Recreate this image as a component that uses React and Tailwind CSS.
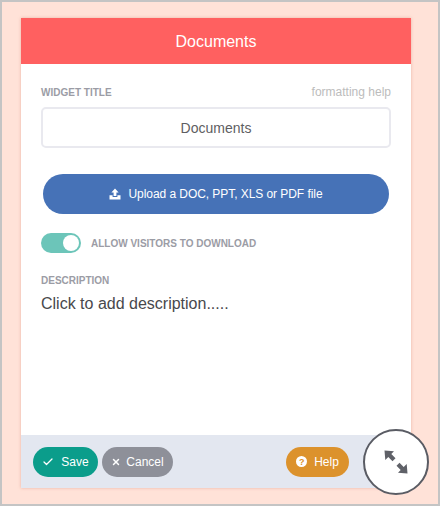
import React from 'react';
import { Check, X } from 'lucide-react';

const Label = ({ children, className = '' }) => (
  <span className={`text-[10px] font-bold text-[#9b9ca5] ${className}`}>{children}</span>
);

const App = () => {
  return (
    <div className="relative h-[506px] w-[440px] overflow-hidden border-2 border-[#c4c4c4] bg-[#ffe2d8] pt-4 pl-[19px] font-['Liberation_Sans',Arial,sans-serif]">
      {/* Widget panel */}
      <div className="flex h-[470px] w-[390px] flex-col bg-white shadow-[0_0_3px_rgba(220,150,130,0.6)]">
        <div className="flex h-[46px] items-center justify-center bg-[#ff6060] pt-0.5 text-base text-white">Documents</div>

        <div className="flex flex-1 flex-col px-5">
          <div className="mt-5 flex items-center justify-between">
            <Label>WIDGET TITLE</Label>
            <span className="text-xs text-[#bcbcbc]">formatting help</span>
          </div>
          <div className="mt-[7px] flex h-[41px] items-center justify-center rounded-[5px] border-2 border-[#e9e9ef] text-sm text-[#5e5e62]">
            Documents
          </div>

          <div className="mt-[26px] ml-0.5 flex h-10 w-[346px] items-center justify-center gap-[7px] rounded-full bg-[#4672b7] text-xs tracking-[-0.06px] text-white">
            <svg width="12" height="12" viewBox="0 0 12 12" fill="white">
              <path d="M6 0.5 9.6 4.4H7.4V8H4.6V4.4H2.4Z" />
              <path d="M0.5 7.2H3.6V9H8.4V7.2H11.5V11.5H0.5Z" />
            </svg>
            Upload a DOC, PPT, XLS or PDF file
          </div>

          <div className="mt-[19px] flex items-center gap-[10px]">
            <div className="flex h-5 w-10 items-center justify-end rounded-full bg-[#6cc5b9] pr-0.5">
              <div className="h-4 w-4 rounded-full bg-white" />
            </div>
            <Label>ALLOW VISITORS TO DOWNLOAD</Label>
          </div>

          <Label className="mt-[22px] leading-3">DESCRIPTION</Label>
          <p className="mt-[7px] text-base leading-5 text-[#48484c]">Click to add description.....</p>
        </div>

        {/* Footer */}
        <div className="flex h-[53px] items-center bg-[#e3e7f0] pl-3 pr-[62px] text-xs text-white">
          <div className="flex h-[30px] w-[65px] items-center justify-center gap-[7px] rounded-full bg-[#0b9d8b]">
            <Check size={12} strokeWidth={2.5} />
            Save
          </div>
          <div className="ml-1 flex h-[30px] w-[71px] items-center justify-center gap-[5px] rounded-full bg-[#8e9099]">
            <X size={10} strokeWidth={3.5} />
            Cancel
          </div>
          <div className="ml-auto flex h-[30px] w-[63px] items-center justify-center gap-[7px] rounded-full bg-[#dc922c]">
            <div className="flex h-[11px] w-[11px] items-center justify-center rounded-full bg-white text-[9px] font-bold text-[#dc922c]">?</div>
            Help
          </div>
        </div>
      </div>

      {/* Expand handle */}
      <div className="absolute top-[427px] left-[361px] flex h-[66px] w-[66px] items-center justify-center rounded-full border-2 border-[#5a5c64] bg-white">
        <svg width="24" height="24" viewBox="0 0 24 24" fill="#5f6168">
          <path d="M0.5 0.5 10 1.3 7.3 4 11.5 8.2 8.5 11.2 4.3 7 1.3 10Z" />
          <path d="M23.5 23.5 14 22.7 16.7 20 12.5 15.8 15.5 12.8 19.7 17 22.7 14Z" />
        </svg>
      </div>
    </div>
  );
};

export default App;
